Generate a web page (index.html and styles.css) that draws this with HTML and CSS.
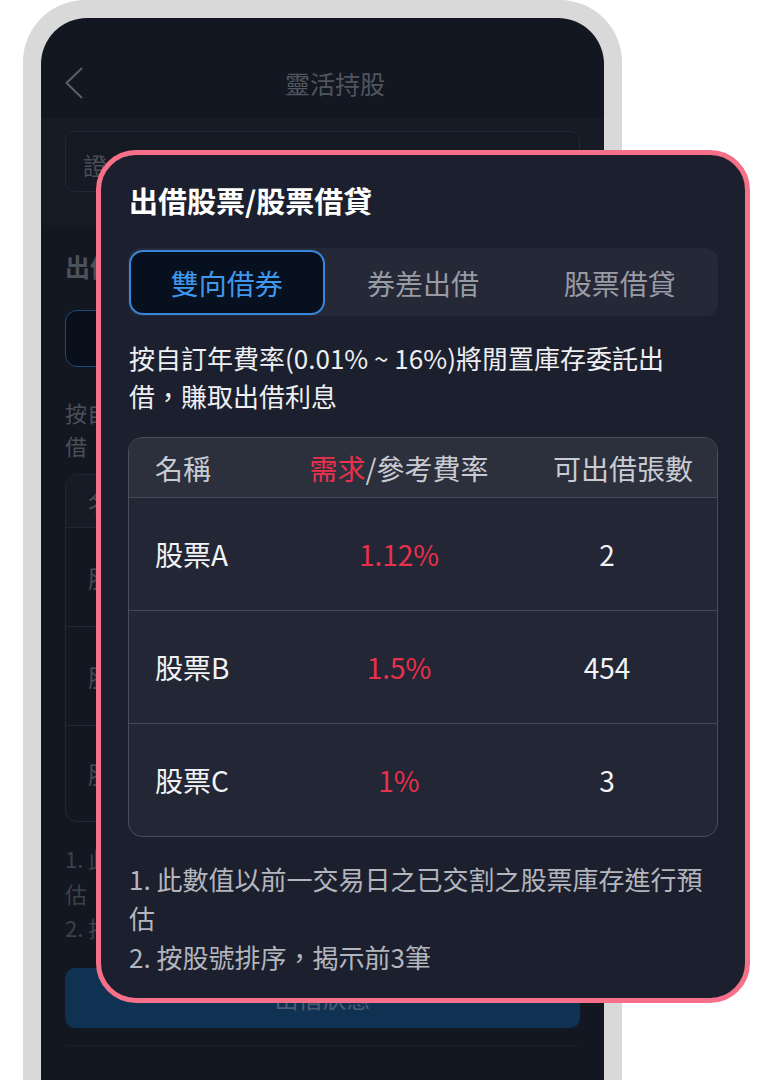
FILE: index.html
```html
<!DOCTYPE html>
<html lang="zh-Hant">
<head>
    <meta charset="UTF-8">
    <meta name="viewport" content="width=device-width, initial-scale=1.0">
    <title>靈活持股</title>
    <link rel="stylesheet" href="styles.css">
</head>
<body>
    <div class="stage">
        <!-- Phone mockup (dimmed background screen, mostly hidden by the card) -->
        <div class="phone">
            <div class="screen">
                <header class="nav">
                    <svg class="back" width="18" height="32" viewBox="0 0 18 32">
                        <path d="M16.5 1.5 L1.5 16 L16.5 30.5" fill="none" stroke="#5a5e67" stroke-width="2" stroke-linecap="round" stroke-linejoin="round"/>
                    </svg>
                    <div class="nav-title">靈活持股</div>
                </header>

                <div class="search-band">
                    <div class="search-box">證</div>
                </div>

                <div class="content">
                    <h2 class="sec-title">出借</h2>
                    <div class="bg-tabs">
                        <div class="bg-tab active"></div>
                        <div class="bg-tab"></div>
                        <div class="bg-tab"></div>
                    </div>
                    <p class="bg-desc">按自<br>借</p>
                    <div class="bg-table">
                        <div class="bg-row bg-head"><span>名</span></div>
                        <div class="bg-row"><span>股</span></div>
                        <div class="bg-row"><span>股</span></div>
                        <div class="bg-row last"><span>股</span></div>
                    </div>
                    <div class="bg-notes">1. 此<br>估<br>2. 按</div>
                    <div class="bg-btn">出借狀態</div>
                    <div class="bg-rule"></div>
                </div>
            </div>
        </div>

        <!-- Highlighted card laid over the phone -->
        <div class="card">
            <h1 class="card-title">出借股票/股票借貸</h1>

            <div class="tabs">
                <div class="tab active">雙向借券</div>
                <div class="tab">券差出借</div>
                <div class="tab">股票借貸</div>
            </div>

            <p class="desc">按自訂年費率(0.01% ~ 16%)將閒置庫存委託出<br>借，賺取出借利息</p>

            <div class="table">
                <div class="row head">
                    <div class="cell name">名稱</div>
                    <div class="cell rate"><span class="red">需求</span>/參考費率</div>
                    <div class="cell qty">可出借張數</div>
                </div>
                <div class="row">
                    <div class="cell name">股票A</div>
                    <div class="cell rate red">1.12%</div>
                    <div class="cell qty">2</div>
                </div>
                <div class="row">
                    <div class="cell name">股票B</div>
                    <div class="cell rate red">1.5%</div>
                    <div class="cell qty">454</div>
                </div>
                <div class="row">
                    <div class="cell name">股票C</div>
                    <div class="cell rate red">1%</div>
                    <div class="cell qty">3</div>
                </div>
            </div>

            <div class="notes">
                1. 此數值以前一交易日之已交割之股票庫存進行預<br>估<br>
                2. 按股號排序，揭示前3筆
            </div>
        </div>
    </div>
</body>
</html>
```

FILE: styles.css
```css
* {
    box-sizing: border-box;
}
body {
    margin: 0;
    background: #fff;
    font-family: "Noto Sans CJK TC", "Noto Sans", sans-serif;
    overflow: hidden;
    height: 1080px;
}
.stage {
    position: relative;
    width: 777px;
    height: 1080px;
    overflow: hidden;
}

/* phone frame */
.phone {
    margin-left: 23px;
    width: 599px;
    padding: 18px 18px 0;
    background: #d9d9d9;
    border-radius: 62px 62px 0 0;
}
.screen {
    background: #131722;
    border-radius: 46px 46px 0 0;
    min-height: 1080px;
    overflow: hidden;
}
.nav {
    display: flex;
    align-items: center;
    height: 100px;
    padding: 30px 0 0 24px;
}
.back {
    display: block;
    flex: none;
}
.nav-title {
    flex: 1;
    margin-right: 17px;
    text-align: center;
    font-size: 25px;
    color: #50555e;
}
.search-band {
    background: #171b26;
    padding: 13px 24px 33px;
}
.search-box {
    height: 61px;
    border: 1px solid #242834;
    border-radius: 10px;
    background: #151924;
    padding: 6px 0 0 17px;
    display: flex;
    align-items: center;
    font-size: 24px;
    color: #4a4e57;
}
.content {
    padding: 24px 24px 0;
}
.sec-title {
    margin: 0;
    height: 34px;
    font-size: 25px;
    line-height: 34px;
    font-weight: bold;
    color: #4c5058;
}
.bg-tabs {
    margin-top: 27px;
    height: 57px;
    display: grid;
    grid-template-columns: repeat(3, 1fr);
    background: #171b25;
    border-radius: 12px;
}
.bg-tab.active {
    background: #090f1b;
    border: 1.5px solid #1e4a7d;
    border-radius: 12px;
}
.bg-desc {
    margin: 29px 0 0;
    font-size: 22px;
    line-height: 33px;
    color: #4b4f57;
}
.bg-table {
    margin-top: 12px;
    border: 1px solid #232733;
    border-radius: 12px;
    overflow: hidden;
}
.bg-row {
    height: 99px;
    border-bottom: 1px solid #232733;
    display: flex;
    align-items: center;
    padding-left: 22px;
    font-size: 24px;
    color: #484c55;
}
.bg-row.bg-head {
    height: 53px;
    background: #171b25;
}
.bg-row.last {
    border-bottom: none;
    height: 95px;
}
.bg-notes {
    margin-top: 19px;
    font-size: 22px;
    line-height: 34.5px;
    color: #3d4149;
}
.bg-btn {
    margin-top: 23px;
    height: 60px;
    border-radius: 10px;
    background: #0f3152;
    display: flex;
    align-items: center;
    justify-content: center;
    font-size: 24px;
    line-height: 30px;
    color: #4e5d73;
}
.bg-rule {
    margin-top: 17px;
    height: 1px;
    background: #1b1f2a;
}

/* overlay card */
.card {
    position: absolute;
    left: 96px;
    top: 150px;
    width: 654px;
    border: 5px solid #f7708a;
    border-radius: 40px;
    background: #1c1f2d;
    padding: 25px 27px 22px;
    color: #eeeff2;
}
.card-title {
    margin: 0 0 0 1px;
    font-size: 29px;
    line-height: 40px;
    font-weight: bold;
    color: #fff;
}
.tabs {
    margin-top: 28px;
    height: 68px;
    padding: 2px 0 1px;
    display: grid;
    grid-template-columns: repeat(3, 1fr);
    background: #252836;
    border-radius: 12px;
}
.tab {
    display: flex;
    align-items: center;
    justify-content: center;
    font-size: 28px;
    color: #989ba4;
}
.tab.active {
    margin-left: 1px;
    background: #06101e;
    border: 2px solid #3a86dc;
    border-radius: 14px;
    color: #3f98ee;
}
.desc {
    margin: 23px 0 0 1px;
    font-size: 26px;
    line-height: 38px;
    color: #eeeff2;
}
.table {
    margin-top: 22px;
    border: 1px solid #4a4e5b;
    border-radius: 14px;
    overflow: hidden;
    background: #232634;
}
.row {
    display: grid;
    grid-template-columns: 172px 196px 220px;
    height: 113px;
    border-bottom: 1px solid #454957;
    font-size: 28px;
    color: #f2f3f5;
}
.row:last-child {
    border-bottom: none;
    height: 112px;
}
.row.head {
    height: 60px;
    background: #2c303d;
    color: #c9cbd2;
}
.cell {
    display: flex;
    align-items: center;
    justify-content: center;
    white-space: nowrap;
}
.cell.name {
    justify-content: flex-start;
    padding-left: 26px;
}
.row.head .cell.qty {
    justify-content: flex-end;
    padding-right: 24px;
}
.red {
    color: #e9304c;
}
.notes {
    margin: 22px 0 0 1px;
    font-size: 26px;
    line-height: 39px;
    color: #b3b6bd;
}
```
